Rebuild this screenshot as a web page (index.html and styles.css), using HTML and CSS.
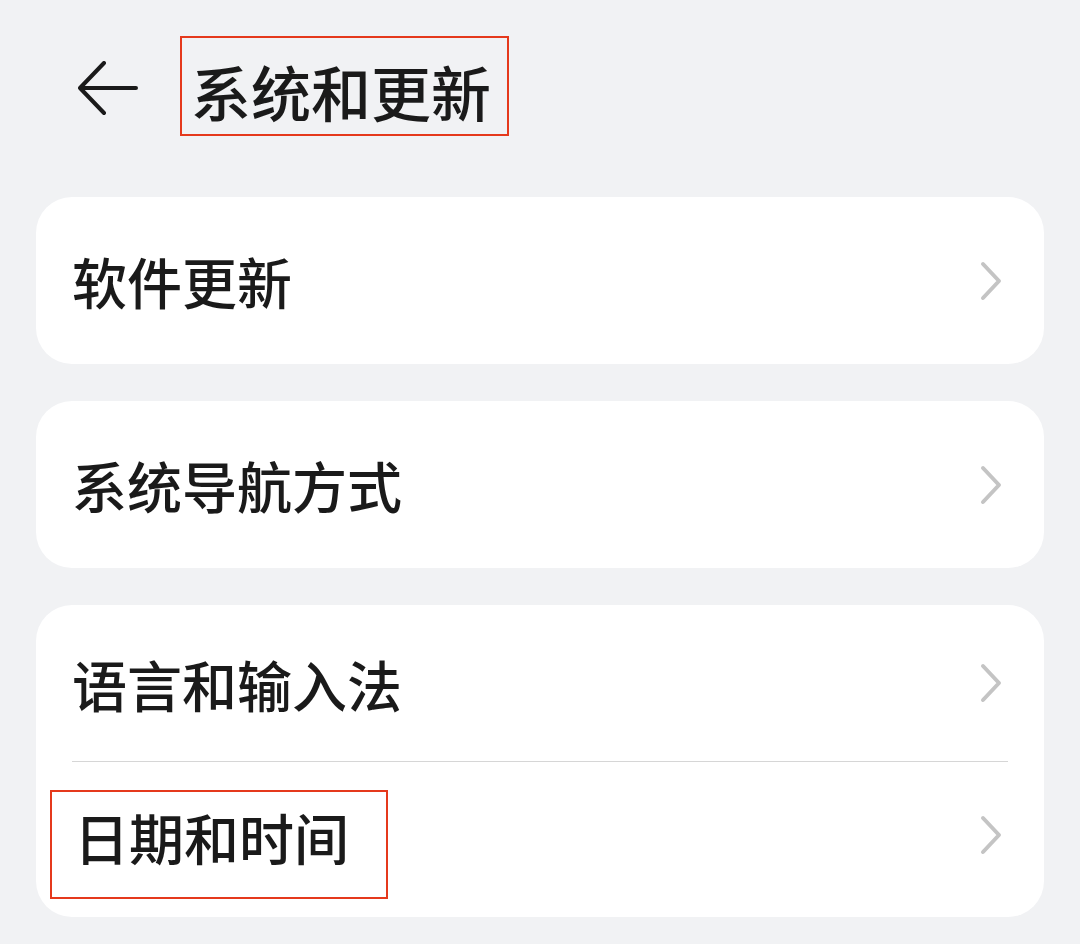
FILE: index.html
```html
<!DOCTYPE html>
<html lang="zh-CN">
<head>
    <meta charset="UTF-8">
    <meta name="viewport" content="width=device-width, initial-scale=1.0">
    <title>系统和更新</title>
    <link rel="stylesheet" href="styles.css">
</head>
<body>
    <div class="header">
        <svg class="back-icon" width="64" height="58" viewBox="0 0 64 58">
            <path d="M58 27H2M26 2L2 27L26 52" fill="none" stroke="#1a1a1a" stroke-width="4" stroke-linecap="round" stroke-linejoin="round"/>
        </svg>
        <h1 class="title marked">系统和更新</h1>
    </div>

    <div class="card">
        <div class="row">
            <span class="label">软件更新</span>
            <svg class="chevron" width="22" height="40" viewBox="0 0 22 40"><path d="M3 3L19 20L3 37" fill="none" stroke="#c4c4c4" stroke-width="4" stroke-linecap="round" stroke-linejoin="round"/></svg>
        </div>
    </div>

    <div class="card">
        <div class="row">
            <span class="label">系统导航方式</span>
            <svg class="chevron" width="22" height="40" viewBox="0 0 22 40"><path d="M3 3L19 20L3 37" fill="none" stroke="#c4c4c4" stroke-width="4" stroke-linecap="round" stroke-linejoin="round"/></svg>
        </div>
    </div>

    <div class="card">
        <div class="row row-top">
            <span class="label">语言和输入法</span>
            <svg class="chevron" width="22" height="40" viewBox="0 0 22 40"><path d="M3 3L19 20L3 37" fill="none" stroke="#c4c4c4" stroke-width="4" stroke-linecap="round" stroke-linejoin="round"/></svg>
        </div>
        <div class="divider"></div>
        <div class="row row-bottom">
            <span class="label marked date-label">日期和时间</span>
            <svg class="chevron" width="22" height="40" viewBox="0 0 22 40"><path d="M3 3L19 20L3 37" fill="none" stroke="#c4c4c4" stroke-width="4" stroke-linecap="round" stroke-linejoin="round"/></svg>
        </div>
    </div>
</body>
</html>
```

FILE: styles.css
```css
body {
    font-family: "Noto Sans CJK SC", "Noto Sans", sans-serif;
    margin: 0;
    padding: 36px 36px 0;
    background-color: #f1f2f4;
    color: #1a1a1a;
}
.header {
    display: flex;
    align-items: center;
    height: 100px;
    padding-left: 42px;
    margin-bottom: 61px;
}
.back-icon {
    margin-top: 8px;
    margin-right: 38px;
}
.title {
    margin: 0;
    font-size: 60px;
    font-weight: 500;
    line-height: 86px;
    padding: 10px 16px 0 9px;
}
.marked {
    border: 2px solid #e5391c;
}
.card {
    background: white;
    border-radius: 36px;
    padding: 0 36px;
    margin-bottom: 37px;
}
.row {
    display: flex;
    align-items: center;
    justify-content: space-between;
    height: 167px;
}
.row-top {
    height: 156px;
}
.row-bottom {
    height: 155px;
    align-items: flex-start;
}
.label {
    font-size: 55px;
    font-weight: 500;
    line-height: 1;
}
.date-label {
    display: flex;
    align-items: center;
    height: 89px;
    margin-top: 28px;
    margin-left: -22px;
    padding: 0 37px 16px 22px;
    line-height: 1;
}
.row-bottom .chevron {
    margin-top: 53px;
}
.chevron {
    margin-right: 6px;
}
.divider {
    height: 1px;
    background: #d6d6d6;
}
```
